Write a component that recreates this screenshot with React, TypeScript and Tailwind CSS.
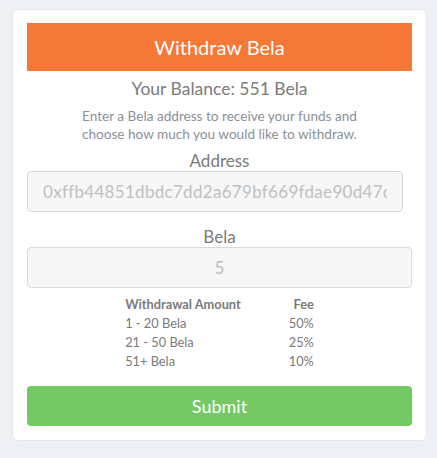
import React from "react";

export default function App() {
  return (
    <div className="min-h-[458px] w-full bg-[#edf1f5] pt-[9px] px-[12px]" style={{ fontFamily: "Lato, 'Open Sans', sans-serif" }}>
      <div className="w-[415px] bg-white rounded-[6px] border border-[#e4e8ec] px-[14px] pt-[13px] pb-[14px] flex flex-col items-center">
        <div className="w-full h-[48px] bg-[#f67837] flex items-center justify-center text-white text-[20px]">
          Withdraw Bela
        </div>
        <div className="mt-[6px] text-[17.5px] leading-[24px] text-[#7b7b7b]">Your Balance: 551 Bela</div>
        <div className="mt-[6px] text-[13.6px] leading-[18px] text-[#8b909a] text-center">
          Enter a Bela address to receive your funds and
          <br />
          choose how much you would like to withdraw.
        </div>
        <div className="mt-[8px] text-[17px] leading-[20px] text-[#7b7b7b]">Address</div>
        <input
          readOnly
          value="0xffb44851dbdc7dd2a679bf669fdae90d47c3a1"
          className="self-start w-[376px] h-[41px] rounded-[4px] border border-[#d9d9d9] bg-[#f7f7f7] px-[15px] text-[17px] tracking-[0.3px] text-[#c0c0c0] outline-none"
          style={{ fontFamily: "Lato, 'Open Sans', sans-serif" }}
        />
        <div className="mt-[15px] text-[17px] leading-[20px] text-[#7b7b7b]">Bela</div>
        <input
          readOnly
          value="5"
          className="w-full h-[41px] rounded-[4px] border border-[#d9d9d9] bg-[#f7f7f7] text-center text-[17px] text-[#c0c0c0] outline-none"
          style={{ fontFamily: "Lato, 'Open Sans', sans-serif" }}
        />
        <table className="mt-[7px] text-[12.8px] leading-[19px] text-[#7b7b7b]">
          <thead>
            <tr>
              <th className="text-left font-bold pr-[48px]">Withdrawal Amount</th>
              <th className="text-right font-bold">Fee</th>
            </tr>
          </thead>
          <tbody>
            <tr><td>1 - 20 Bela</td><td className="text-right">50%</td></tr>
            <tr><td>21 - 50 Bela</td><td className="text-right">25%</td></tr>
            <tr><td>51+ Bela</td><td className="text-right">10%</td></tr>
          </tbody>
        </table>
        <button className="mt-[15px] w-full h-[40px] rounded-[4px] bg-[#74c965] text-white text-[18px]">Submit</button>
      </div>
    </div>
  );
}
